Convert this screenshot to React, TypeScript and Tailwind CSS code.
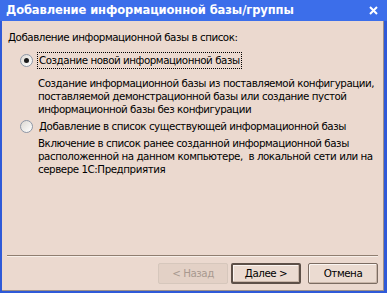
export default function App() {
  return (
    <div className="w-[387px] h-[293px] flex flex-col bg-[#2f5ad8] font-['DejaVu_Sans',sans-serif] text-[10.3px] leading-[13px] tracking-[-0.45px] whitespace-nowrap text-black">
      {/* title bar */}
      <div className="h-[21px] shrink-0 flex items-center bg-[#3c6eea] pl-[6px] pr-[9px]">
        <span className="flex-1 font-bold text-[11.5px] text-white tracking-[-0.1px]">
          Добавление информационной базы/группы
        </span>
        <svg width={9} height={9} viewBox="0 0 9 9">
          <path d="M1 1 L8 8 M8 1 L1 8" stroke="#fff" strokeWidth={2} />
        </svg>
      </div>

      {/* body */}
      <div className="flex-1 flex flex-col ml-[2px] mr-[3px] mb-[2px] bg-[#ebd9cf] border-r border-b border-[#9c8f88]">
        <div className="pl-[6px] pt-[10px]">Добавление информационной базы в список:</div>

        <div className="flex items-center mt-[8px] pl-[18px]">
          <Radio checked />
          <span className="ml-[4px] px-[1px] py-[1px] border border-dotted border-black">
            Создание новой информационной базы
          </span>
        </div>
        <p className="pl-[36px] mt-[8px]">
          Создание информационной базы из поставляемой конфигурации,
          <br />
          поставляемой демонстрационной базы или создание пустой
          <br />
          информационной базы без конфигурации
        </p>

        <div className="flex items-center mt-[2px] pl-[18px]">
          <Radio />
          <span className="ml-[5px] px-[1px] py-[2px]">
            Добавление в список существующей информационной базы
          </span>
        </div>
        <p className="pl-[36px] mt-[2px]">
          Включение в список ранее созданной информационной базы
          <br />
          расположенной на данном компьютере, &nbsp;в локальной сети или на
          <br />
          сервере 1С:Предприятия
        </p>

        <div className="flex-1" />
        <div className="mx-[5px] border-t border-[#8f7e70] border-b border-b-[#f7efe9]" />

        <div className="flex justify-end items-center gap-[3px] pr-[5px] pt-[6px] pb-[6px]">
          <button
            type="button"
            disabled
            className="w-[70px] h-[21px] rounded-[2px] border border-[#d6c7bc] bg-[#e3d1c6] text-[#a8998f]"
          >
            &lt; Назад
          </button>
          <button
            type="button"
            className="w-[70px] h-[21px] rounded-[2px] border-2 border-[#5d5048] bg-[#ebdbd1] shadow-[inset_-1px_-1px_0_#c8b5a8,inset_1px_1px_0_#fbf5f1]"
          >
            Далее &gt;
          </button>
          <button
            type="button"
            className="ml-[4px] w-[70px] h-[21px] rounded-[2px] border border-[#7b6c62] bg-[#ebdbd1] shadow-[inset_-1px_-1px_0_#c8b5a8,inset_1px_1px_0_#fbf5f1]"
          >
            Отмена
          </button>
        </div>
      </div>
    </div>
  );
}

function Radio({ checked = false }: { checked?: boolean }) {
  return (
    <span className="w-[13px] h-[13px] shrink-0 rounded-full border border-[#8d97a6] bg-[linear-gradient(135deg,#dcd8d2,#ffffff)] flex items-center justify-center">
      {checked ? <span className="w-[5px] h-[5px] rounded-full bg-[#1a1a1a]" /> : null}
    </span>
  );
}
